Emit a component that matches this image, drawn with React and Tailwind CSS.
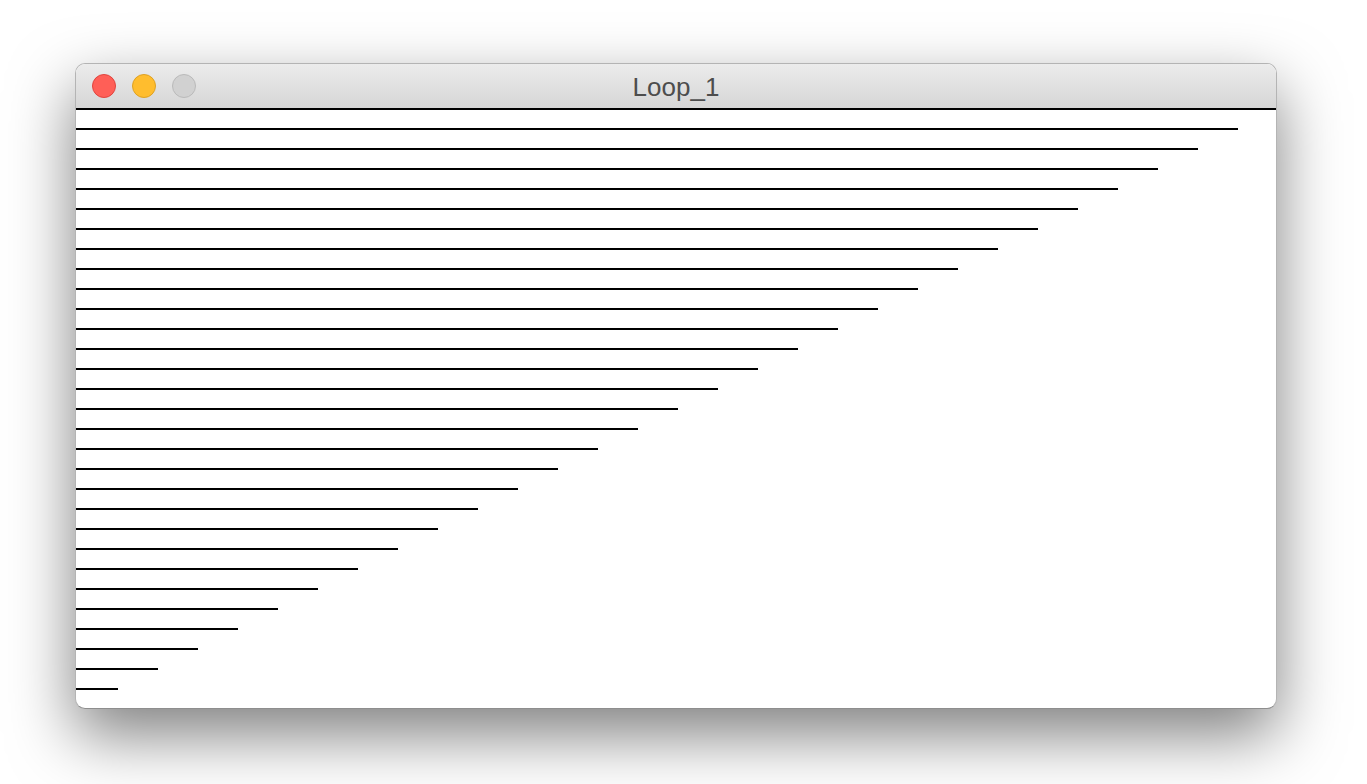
export default function App() {
  const rows = Array.from({ length: 30 }, (_, i) => (i === 0 ? 1200 : 1202 - 40 * i));
  return (
    <div className="w-[1367px] h-[784px] bg-white overflow-hidden pt-[63px] pl-[75px]" style={{ fontFamily: '"Liberation Sans", Arial, sans-serif' }}>
      <div className="w-[1202px] rounded-[10px] border border-[#b4b4b4] border-b-[#8e8e8e] overflow-hidden shadow-[0_26px_64px_rgba(0,0,0,0.5)] bg-white">
        <div className="relative h-[44px] bg-gradient-to-b from-[#ececec] to-[#d6d6d6] flex items-center">
          <div className="flex items-center gap-[16px] pl-[16px]">
            <div className="w-[24px] h-[24px] rounded-full bg-[#ff5f57] border border-[#e0443e]" />
            <div className="w-[24px] h-[24px] rounded-full bg-[#ffbd2e] border border-[#dea123]" />
            <div className="w-[24px] h-[24px] rounded-full bg-[#d1d1d1] border border-[#bababa]" />
          </div>
          <div className="absolute inset-0 flex items-center justify-center text-[26px] text-[#4d4d4d] pt-[2px] pointer-events-none">
            Loop_1
          </div>
        </div>
        <div className="h-[600px] flex flex-col">
          {rows.map((w, i) => (
            <div key={i} className="h-[20px] shrink-0">
              <div className="h-[2px] bg-black" style={{ width: w }} />
            </div>
          ))}
        </div>
      </div>
    </div>
  );
}
